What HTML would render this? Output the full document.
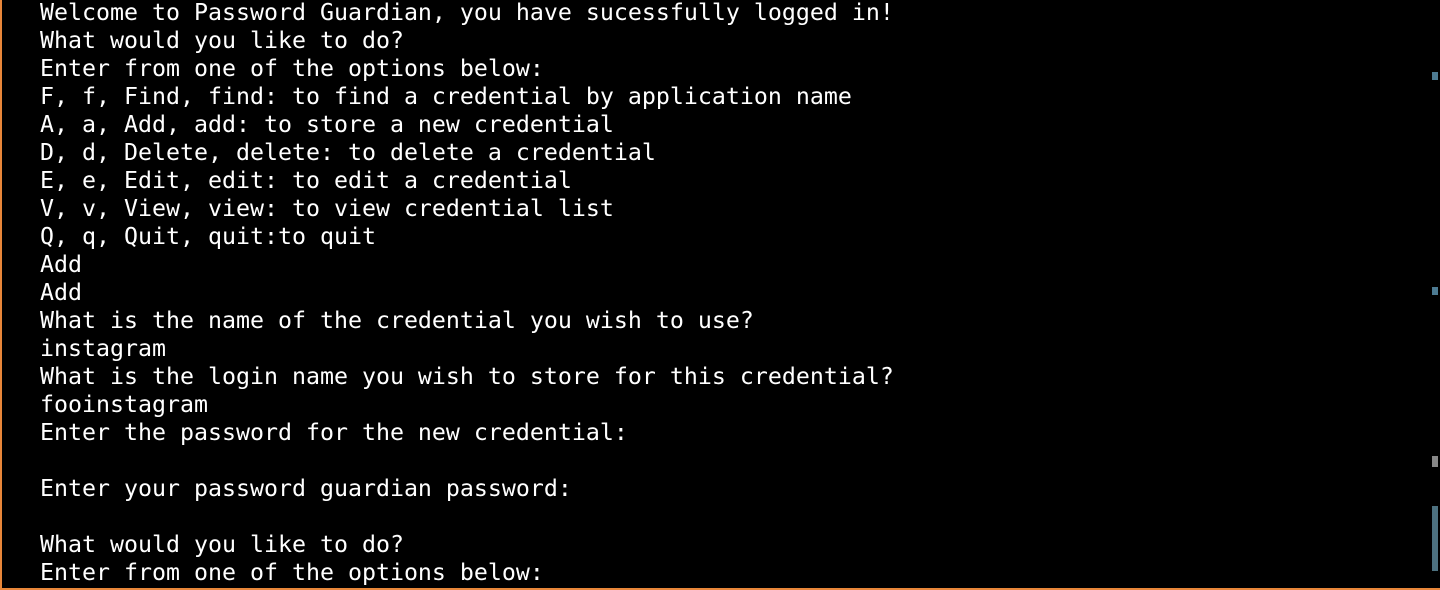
<html><head><style>
body{margin:0;width:1440px;height:590px;background:#000;overflow:hidden;position:relative}
pre{position:absolute;left:40px;top:-1px;margin:0;font:23.25px/28px "DejaVu Sans Mono","Liberation Mono",monospace;color:#fff}
.b{position:absolute;background:#e8873a}
.m{position:absolute;left:1432px;width:6px}
</style></head><body>
<div class="b" style="left:0;top:0;width:2px;height:590px"></div>
<div class="b" style="left:0;top:588px;width:1440px;height:2px"></div>
<div class="m" style="top:72px;height:8px;background:#4d7b92"></div>
<div class="m" style="top:287px;height:8px;background:#4d7b92"></div>
<div class="m" style="top:456px;height:11px;background:#888"></div>
<div class="m" style="top:506px;height:65px;background:#4d7180"></div>
<pre>Welcome to Password Guardian, you have sucessfully logged in!
What would you like to do?
Enter from one of the options below:
F, f, Find, find: to find a credential by application name
A, a, Add, add: to store a new credential
D, d, Delete, delete: to delete a credential
E, e, Edit, edit: to edit a credential
V, v, View, view: to view credential list
Q, q, Quit, quit:to quit
Add
Add
What is the name of the credential you wish to use?
instagram
What is the login name you wish to store for this credential?
fooinstagram
Enter the password for the new credential:

Enter your password guardian password:

What would you like to do?
Enter from one of the options below:</pre>
</body></html>
